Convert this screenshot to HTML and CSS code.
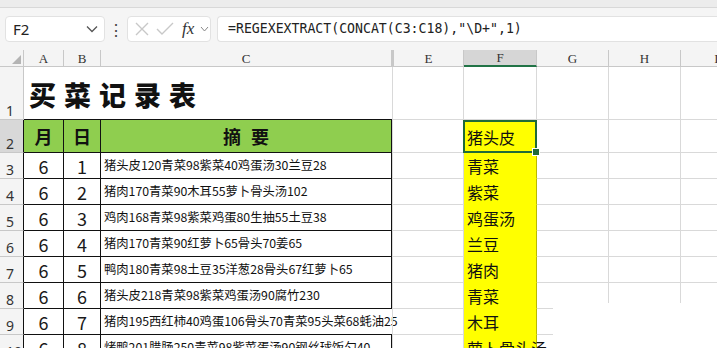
FILE: index.html
```html
<!DOCTYPE html>
<html>
<head>
  <meta charset="utf-8">
  <title>买菜记录表</title>
  <link rel="stylesheet" href="styles.css">
</head>
<body>

<div class="top-strip"></div>

<div class="formula-bar">
    <div class="name-box">
        <span>F2</span>
        <svg width="12" height="8" viewBox="0 0 12 8"><path d="M1 1.5 L6 6.5 L11 1.5" fill="none" stroke="#555" stroke-width="1.3"/></svg>
    </div>
    <div class="dots">&#8942;</div>
    <div class="fx-box">
        <svg width="16" height="16" viewBox="0 0 16 16"><path d="M2 2 L14 14 M14 2 L2 14" stroke="#c8c8c8" stroke-width="1.4"/></svg>
        <svg width="18" height="16" viewBox="0 0 18 16"><path d="M1 8 L6 13 L17 2" fill="none" stroke="#c8c8c8" stroke-width="1.4"/></svg>
        <span class="fx">fx</span>
        <svg width="9" height="6" viewBox="0 0 9 6"><path d="M1 1 L4.5 5 L8 1" fill="none" stroke="#888" stroke-width="1"/></svg>
    </div>
    <div class="formula">=REGEXEXTRACT(CONCAT(C3:C18),"\D+",1)</div>
</div>

<div class="sheet">
    <div class="row head-row">
        <div class="cell corner"><span class="tri"></span></div>
        <div class="cell col-head">A</div>
        <div class="cell col-head">B</div>
        <div class="cell col-head">C</div>
        <div class="cell col-head hidden-col"></div>
        <div class="cell col-head">E</div>
        <div class="cell col-head active-head">F</div>
        <div class="cell col-head">G</div>
        <div class="cell col-head">H</div>
        <div class="cell col-head">I</div>
    </div>

    <div class="row row-title">
        <div class="cell row-num">1</div>
        <div class="cell title-cell">买菜记录表</div>
        <div class="cell gap-d"></div>
        <div class="cell"></div>
        <div class="cell"></div>
        <div class="cell"></div>
        <div class="cell"></div>
        <div class="cell"></div>
    </div>

    <div class="row row-head">
        <div class="cell row-num active-num edge">2</div>
        <div class="cell green t">月</div>
        <div class="cell green t">日</div>
        <div class="cell green t summary-head">摘 要</div>
        <div class="cell gap-d"></div>
        <div class="cell"></div>
        <div class="cell yellow result selected">猪头皮<span class="handle"></span></div>
        <div class="cell"></div>
        <div class="cell"></div>
        <div class="cell"></div>
    </div>

    <div class="row">
        <div class="cell row-num edge">3</div>
        <div class="cell t num">6</div>
        <div class="cell t num">1</div>
        <div class="cell t memo">猪头皮120青菜98紫菜40鸡蛋汤30兰豆28</div>
        <div class="cell gap-d"></div>
        <div class="cell"></div>
        <div class="cell yellow result">青菜</div>
        <div class="cell"></div>
        <div class="cell"></div>
        <div class="cell"></div>
    </div>

    <div class="row">
        <div class="cell row-num edge">4</div>
        <div class="cell t num">6</div>
        <div class="cell t num">2</div>
        <div class="cell t memo">猪肉170青菜90木耳55萝卜骨头汤102</div>
        <div class="cell gap-d"></div>
        <div class="cell"></div>
        <div class="cell yellow result">紫菜</div>
        <div class="cell"></div>
        <div class="cell"></div>
        <div class="cell"></div>
    </div>

    <div class="row">
        <div class="cell row-num edge">5</div>
        <div class="cell t num">6</div>
        <div class="cell t num">3</div>
        <div class="cell t memo">鸡肉168青菜98紫菜鸡蛋80生抽55土豆38</div>
        <div class="cell gap-d"></div>
        <div class="cell"></div>
        <div class="cell yellow result">鸡蛋汤</div>
        <div class="cell"></div>
        <div class="cell"></div>
        <div class="cell"></div>
    </div>

    <div class="row">
        <div class="cell row-num edge">6</div>
        <div class="cell t num">6</div>
        <div class="cell t num">4</div>
        <div class="cell t memo">猪肉170青菜90红萝卜65骨头70姜65</div>
        <div class="cell gap-d"></div>
        <div class="cell"></div>
        <div class="cell yellow result">兰豆</div>
        <div class="cell"></div>
        <div class="cell"></div>
        <div class="cell"></div>
    </div>

    <div class="row">
        <div class="cell row-num edge">7</div>
        <div class="cell t num">6</div>
        <div class="cell t num">5</div>
        <div class="cell t memo">鸭肉180青菜98土豆35洋葱28骨头67红萝卜65</div>
        <div class="cell gap-d"></div>
        <div class="cell"></div>
        <div class="cell yellow result">猪肉</div>
        <div class="cell"></div>
        <div class="cell"></div>
        <div class="cell"></div>
    </div>

    <div class="row">
        <div class="cell row-num edge">8</div>
        <div class="cell t num">6</div>
        <div class="cell t num">6</div>
        <div class="cell t memo">猪头皮218青菜98紫菜鸡蛋汤90腐竹230</div>
        <div class="cell gap-d"></div>
        <div class="cell"></div>
        <div class="cell yellow result">青菜</div>
        <div class="cell"></div>
        <div class="cell"></div>
        <div class="cell"></div>
    </div>

    <div class="row">
        <div class="cell row-num edge">9</div>
        <div class="cell t num">6</div>
        <div class="cell t num">7</div>
        <div class="cell t memo open">猪肉195西红柿40鸡蛋106骨头70青菜95头菜68蚝油25</div>
        <div class="cell gap-d"></div>
        <div class="cell"></div>
        <div class="cell yellow result">木耳</div>
        <div class="cell"></div>
        <div class="cell"></div>
        <div class="cell"></div>
    </div>

    <div class="row">
        <div class="cell row-num edge">10</div>
        <div class="cell t num">6</div>
        <div class="cell t num">8</div>
        <div class="cell t memo">烤鸭201腊肠250青菜98紫菜蛋汤90钢丝球饭勺40</div>
        <div class="cell gap-d"></div>
        <div class="cell"></div>
        <div class="cell yellow result">萝卜骨头汤</div>
        <div class="cell"></div>
        <div class="cell"></div>
        <div class="cell"></div>
    </div>

    <div class="blank-patch"></div>
</div>

</body>
</html>
```

FILE: styles.css
```css
body {
    margin: 0;
    width: 717px;
    height: 348px;
    overflow: hidden;
    background: #fff;
    font-family: "Noto Sans CJK SC", "Noto Sans", sans-serif;
    color: #111;
}

.top-strip {
    height: 7px;
    background: #ececec;
    border-bottom: 1px solid #d8d8d8;
}

/* formula bar */
.formula-bar {
    display: flex;
    align-items: center;
    height: 42px;
    padding: 0 0 0 5px;
    background: #f5f5f5;
    box-sizing: border-box;
    overflow: hidden;
}

.name-box {
    display: flex;
    align-items: center;
    justify-content: space-between;
    width: 100px;
    height: 26px;
    padding: 0 6px 0 7px;
    box-sizing: border-box;
    background: #fff;
    border: 1px solid #e2e2e2;
    border-radius: 4px;
    font-family: "Noto Sans", sans-serif;
    font-size: 15px;
    color: #222;
}

.dots {
    width: 22px;
    text-align: center;
    font-size: 16px;
    color: #444;
}

.fx-box {
    display: flex;
    align-items: center;
    gap: 6px;
    width: 84px;
    height: 26px;
    padding: 0 0 0 6px;
    box-sizing: border-box;
    background: #fff;
    border: 1px solid #e2e2e2;
    border-radius: 4px;
}

.fx {
    font-family: "Liberation Serif", serif;
    font-style: italic;
    font-size: 17px;
    color: #333;
    margin-left: 2px;
}

.formula {
    flex: 1;
    height: 26px;
    margin-left: 6px;
    padding-left: 10px;
    box-sizing: border-box;
    background: #fff;
    border: 1px solid #e2e2e2;
    border-right: none;
    border-radius: 4px 0 0 4px;
    font-family: "DejaVu Sans Mono", monospace;
    font-size: 13.2px;
    line-height: 24px;
    color: #222;
}

/* sheet grid */
.sheet {
    position: relative;
    overflow: hidden;
}

.row {
    display: grid;
    grid-template-columns: 24px 40px 37px 291px 2px 70px 73px 72px 72px 72px;
    height: 26px;
}

.head-row { height: 17px; background: #f4f4f4; }
.row-title { height: 53px; }
.row-head { height: 33px; }

.cell {
    box-sizing: border-box;
    border-right: 1px solid #d9d9d9;
    border-bottom: 1px solid #d9d9d9;
    display: flex;
    align-items: center;
    white-space: nowrap;
    min-width: 0;
}

.corner {
    position: relative;
    border-color: #c8c8c8;
}

.tri {
    position: absolute;
    right: 2px;
    bottom: 2px;
    border-left: 9px solid transparent;
    border-bottom: 9px solid #b4b4b4;
}

.col-head {
    justify-content: center;
    font-family: "Liberation Serif", serif;
    font-size: 13px;
    line-height: 1;
    color: #333;
    border-color: #c8c8c8;
}

.hidden-col {
    border-left: 1px solid #c8c8c8;
}

.active-head {
    background: #d6d6d6;
    border-bottom: 2px solid #217346;
}

.row-num {
    align-items: flex-end;
    padding: 0 0 1px 6px;
    font-family: "Noto Sans", sans-serif;
    font-size: 14px;
    color: #333;
    background: #f4f4f4;
    border-color: #c8c8c8;
    line-height: 1.1;
}

.active-num {
    background: #d8d8d8;
}

.row-num.edge {
    border-right-color: #111;
}

/* title */
.title-cell {
    grid-column: 2 / 5;
    align-items: flex-end;
    padding: 0 0 8px 5px;
    font-size: 27px;
    font-weight: 900;
    line-height: 1.2;
    letter-spacing: 8px;
    border-right: none;
    border-bottom: 1px solid #111;
    color: #111;
}

.gap-d {
    border-right: none;
    border-left: 1px solid #d9d9d9;
}

/* table body */
.t {
    justify-content: center;
    border-right: 1px solid #111;
    border-bottom: 1px solid #111;
}

.green {
    background: #8fce4f;
    font-size: 18px;
    font-weight: 700;
}

.summary-head {
    word-spacing: 6px;
}

.num {
    font-size: 18px;
    line-height: 1;
    color: #1a1a1a;
}

.memo {
    justify-content: flex-start;
    padding-left: 3px;
    font-size: 12.3px;
    line-height: 1.2;
    overflow: visible;
}

.memo.open {
    border-right: none;
}

/* results column */
.yellow {
    background: #ffff00;
}

.result {
    position: relative;
    padding: 2px 0 0 3px;
    font-size: 16px;
    line-height: 1.2;
    overflow: visible;
    border-right-color: #b9b900;
    border-bottom-color: #ffff00;
}

.selected {
    border: 2px solid #1f6a3a;
    margin-left: -1px;
    padding-left: 2px;
}

.handle {
    position: absolute;
    right: -5px;
    bottom: -5px;
    width: 6px;
    height: 6px;
    background: #1f6a3a;
    border: 1px solid #fff;
    z-index: 2;
}

.blank-patch {
    position: absolute;
    left: 553px;
    top: 253px;
    right: 0;
    height: 60px;
    background: #fff;
}
```
